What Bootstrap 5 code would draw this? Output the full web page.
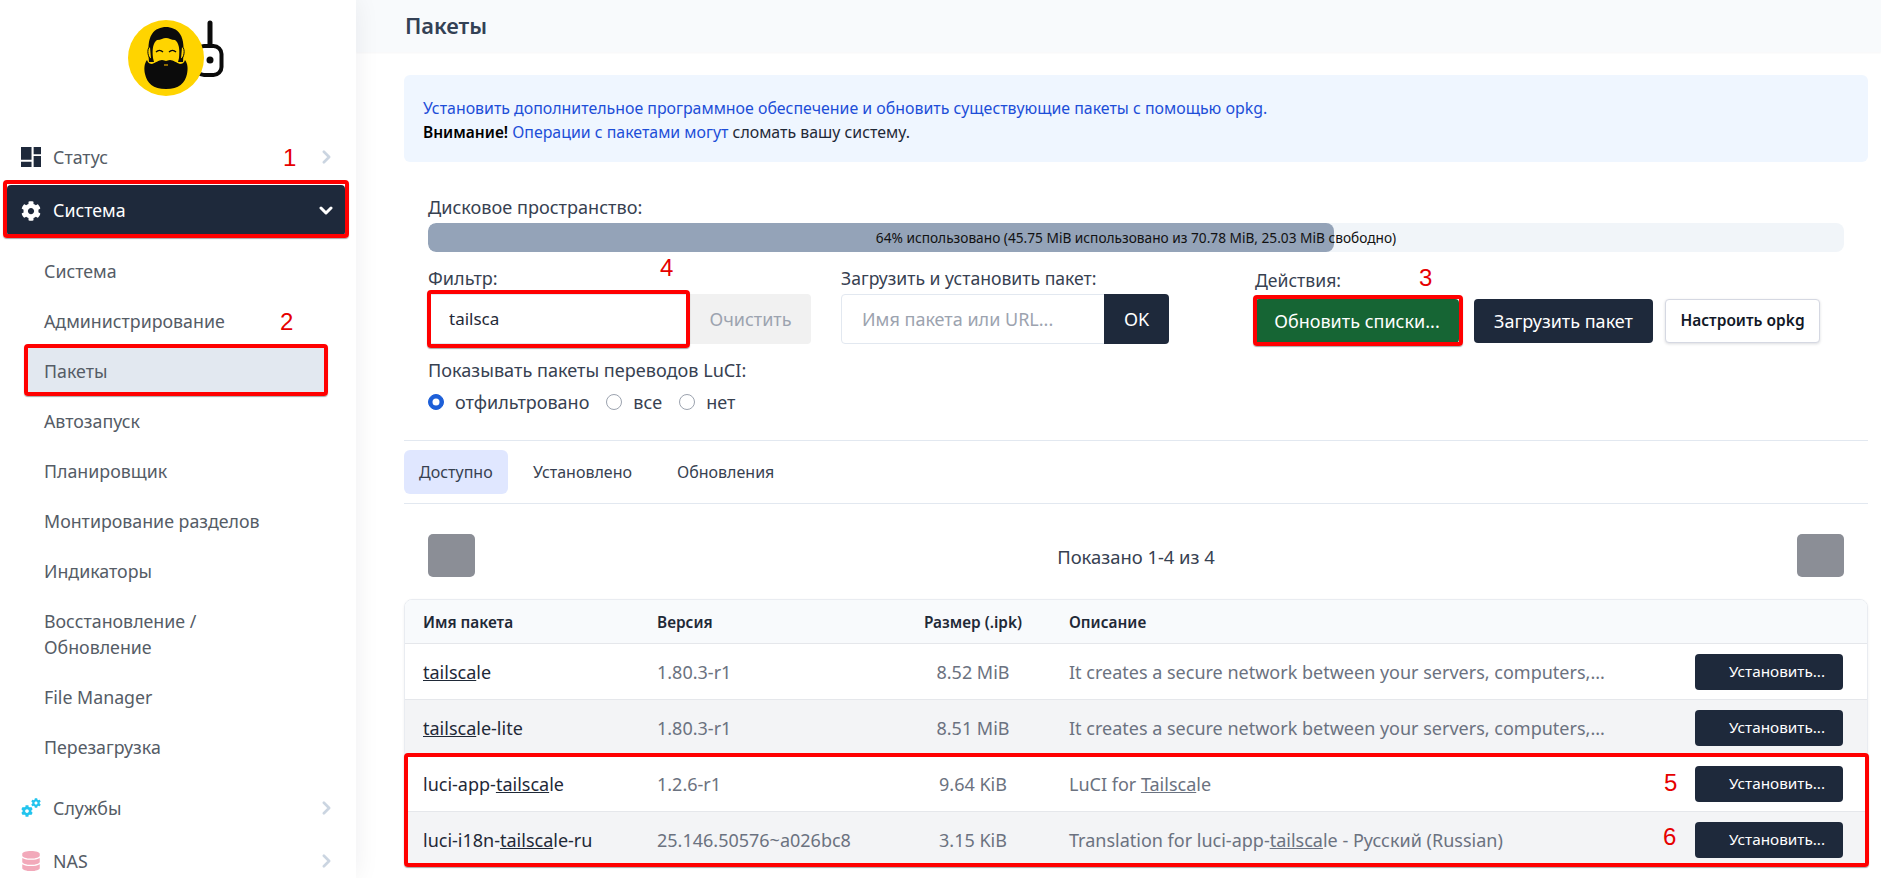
<!DOCTYPE html>
<html lang="ru">
<head>
<meta charset="utf-8">
<title>Пакеты</title>
<link href="https://cdn.jsdelivr.net/npm/bootstrap@5.3.0/dist/css/bootstrap.min.css" rel="stylesheet">
<style>
html,body{height:878px;overflow:hidden}
body{font-family:"Noto Sans","Open Sans",sans-serif;font-size:18px;color:#1f2937;background:#fff;position:relative}
.shell{height:878px}
.side{width:356px;flex:none;background:#fff;box-shadow:0 0 24px rgba(15,23,42,.07);position:relative;z-index:2;height:878px;overflow:hidden}
.logo-box{height:132px;padding:10px 0 0 120px}
.menu-top{display:flex;align-items:center;height:50px;margin:0 11px 3px 7px;padding:0 14px;color:#555c66;border-radius:4px;font-size:17.8px;text-decoration:none}
.menu-top svg.ico{width:20px;height:20px;margin-right:12px;flex:none}
.menu-top svg.chev{margin-left:auto;flex:none}
.menu-on{background:#1e293b;color:#fff;height:51px;margin-bottom:10px}
.menu-on svg.chev{margin-right:-2px}
.menu-sub{display:block;padding:12px 16px;margin:0 32px 0 28px;color:#555c66;line-height:26px;font-size:17.8px;text-decoration:none}
.menu-sub-on{background:#e2e8f0}
.sub-list{margin-bottom:11px}
.main-col{flex:1;min-width:0}
.top-head{height:52px;background:#f8fafc;padding:0 13px 0 49px;display:flex;align-items:center;font-size:21.800px;font-weight:600;color:#334155;box-shadow:0 1px 2px rgba(15,23,42,.04)}
.body-col{padding:23px 13px 0 48px}
.info-box{height:87px;background:#eff6ff;border:0;border-radius:6px;padding:21px 19px;margin:0;line-height:24px;color:#1d4ed8;font-size:15.900px}
.info-box b{color:#000;font-weight:600;font-size:15.500px}
.info-box .dark{color:#1f2937}
.disk-wrap{padding:33px 24px 0}
.fld-label{color:#374151;line-height:24px;font-size:18.100px;display:block;margin:0}
.disk-bar{height:29px;background:#f1f5f9;border-radius:8px;position:relative;margin-top:4px}
.disk-bar .progress-bar{background:#94a3b8;border-radius:8px}
.disk-text{position:absolute;left:0;right:0;top:0;line-height:30px;text-align:center;font-size:13.700px;color:#111}
.form-line{margin-top:14px}
.cell-a{width:383px;flex:none}
.cell-b{width:328px;flex:none;margin-left:30px}
.cell-b .fld-label{font-size:17.600px}
.cell-c{margin-left:86px;padding-top:2px}
.cell-c .fld-label{font-size:17.600px}
.cell-a .input-group,.cell-b .input-group{height:50px;margin-top:4px}
.fld-input{border-color:#e2e8f0;border-radius:4px;font-size:18px;padding:0 20px;color:#1f2937}
.cell-a .fld-input{font-size:17px}
.fld-input::placeholder{color:#9ca3af}
.btn-clear{width:121px;background:#f1f1f1;color:#9ca3af;font-size:18px;border:0;flex:none;border-radius:0 4px 4px 0}
.btn-ok{width:65px;background:#1e293b;color:#fff;font-size:18px;border:0;flex:none;border-radius:0 4px 4px 0}
.act-row{margin-top:7px}
.btn-act{height:44px;border-radius:4px;font-size:18px;padding:0;border:0;color:#fff;background:#1e293b}
.btn-act:hover{color:#fff;background:#1e293b}
.btn-upd{width:204px;background:#166534;margin-right:15px}
.btn-upd:hover{background:#166534}
.btn-load{width:179px;margin-right:12px}
.btn-cfg{width:155px;background:#fff;color:#111827;font-weight:600;font-size:15.500px;border:1px solid #d5d8e2;box-shadow:0 1px 3px rgba(15,23,42,.15)}
.radio-title{margin-top:14px}
.radio-row{margin-top:8px;line-height:24px;color:#374151}
.form-check-input{width:16px;height:16px;margin:0 11px 0 0;border-color:#9ca3af}
.form-check-input:checked{background-color:#1d5fd8;border-color:#1d5fd8}
.radio-item{display:flex;align-items:center;margin-right:17px}
.line-a{border:0;border-top:1px solid #e2e8f0;margin:0;opacity:1}
.rule-top{margin-top:26px}
.tabs-row{padding:9px 0 9px}
.tab-link{height:44px;display:flex;align-items:center;padding:0 15px;color:#374151;font-size:16px;border-radius:6px;margin-right:15px;text-decoration:none}
.tab-on{background:#e0e7ff;width:104px;margin-right:10px;color:#374151}
.pager{padding:30px 24px 0;height:95px;color:#374151}
.pager-sq{width:47px;height:43px;background:#8b8e96;border-radius:5px;border:0;padding:0}
.pager-txt{flex:1;text-align:center;padding-top:9px;font-size:18.400px;line-height:27px}
.pack-wrap{border:1px solid #e9ecf1;border-radius:8px;overflow:hidden;height:265px;box-shadow:0 1px 3px rgba(15,23,42,.06)}
.pack-table{table-layout:fixed;margin:0;font-size:18px}
.pack-table th{height:43px;background:#f8fafc;font-size:15.400px;font-weight:600;color:#1f2937;border-bottom:1px solid #e5e7eb;vertical-align:middle;padding:3px 18px 0}
.pack-table td{height:56px;vertical-align:middle;padding:2px 18px 0;border-bottom:1px solid #e5e7eb;color:#6b7280;background:#fff}
.pack-table tr.row-alt td{background:#f3f4f6}
.pack-table td.pname{color:#1f2937}
.pack-table th.c-size{text-align:center;padding:3px 0 0 47px}
.pack-table td.c-size{text-align:center;padding:2px 0 0 47px}
.pack-table td.c-btn{padding:1px 24px 0 0;text-align:right}
.btn-inst{width:148px;height:36px;border-radius:4px;background:#1e293b;color:#fff;font-size:15.300px;border:0;padding:0 10px 0 34px;text-align:left;white-space:nowrap}
.btn-inst:hover{background:#1e293b;color:#fff}
.mark-box{position:absolute;border:4px solid #f00;border-radius:4px;z-index:5;pointer-events:none;box-shadow:0 1px 1px rgba(0,0,0,.35)}
.mark-num{position:absolute;color:#e60000;font-family:"Liberation Sans",sans-serif;font-size:24px;line-height:24px;z-index:5}
.b1{left:3px;top:180px;width:346px;height:58px}
.b2{left:24px;top:344px;width:304px;height:52px}
.b3{left:427px;top:290px;width:263px;height:58px}
.b4{left:1253px;top:295px;width:210px;height:51px}
.b5{left:404px;top:753px;width:1465px;height:114px}
.n1{left:283px;top:146px}.n2{left:280px;top:310px}.n3{left:1419px;top:266px}.n4{left:660px;top:256px}.n5{left:1664px;top:771px}.n6{left:1663px;top:825px}
</style>
</head>
<body>
<svg width="0" height="0" class="position-absolute">
<symbol id="cog" viewBox="0 0 512 512"><path d="M487.4 315.7l-42.6-24.6c4.3-23.2 4.3-47 0-70.2l42.6-24.6c4.9-2.8 7.1-8.6 5.5-14-11.1-35.6-30-67.8-54.7-94.6-3.8-4.1-10-5.1-14.8-2.3L380.8 110c-17.9-15.4-38.5-27.3-60.8-35.1V25.8c0-5.6-3.9-10.5-9.4-11.7-36.7-8.2-74.3-7.8-109.2 0-5.5 1.2-9.4 6.1-9.4 11.7V75c-22.2 7.9-42.8 19.8-60.8 35.1L88.7 85.5c-4.9-2.8-11-1.9-14.8 2.3-24.7 26.7-43.6 58.9-54.7 94.6-1.7 5.4.6 11.2 5.5 14L67.3 221c-4.3 23.2-4.3 47 0 70.2l-42.6 24.6c-4.9 2.8-7.1 8.6-5.5 14 11.1 35.6 30 67.8 54.7 94.6 3.8 4.1 10 5.1 14.8 2.3l42.6-24.6c17.9 15.4 38.5 27.3 60.8 35.1v49.2c0 5.6 3.9 10.5 9.4 11.7 36.7 8.2 74.3 7.8 109.2 0 5.5-1.2 9.4-6.1 9.4-11.7v-49.2c22.2-7.9 42.8-19.8 60.8-35.1l42.6 24.6c4.9 2.8 11 1.9 14.8-2.3 24.7-26.7 43.6-58.9 54.7-94.6 1.5-5.5-.7-11.3-5.6-14.1zM256 336c-44.1 0-80-35.9-80-80s35.9-80 80-80 80 35.9 80 80-35.9 80-80 80z"/></symbol>
<symbol id="chev-r" viewBox="0 0 10 16"><path d="M2 2l6 6-6 6" fill="none" stroke="#cbd5e1" stroke-width="3" stroke-linecap="round" stroke-linejoin="round"/></symbol>
</svg>
<div class="shell d-flex">
  <aside class="side">
    <div class="logo-box">
      <svg width="110" height="90" viewBox="120 10 110 90" class="d-block">
        <path d="M210 23v24" stroke="#0b0b0b" stroke-width="5" stroke-linecap="round"/>
        <rect x="196" y="46" width="25.500" height="29" rx="8" fill="#fff" stroke="#0b0b0b" stroke-width="4"/>
        <circle cx="210" cy="60" r="3.500" fill="#0b0b0b"/>
        <circle cx="166" cy="58" r="38" fill="#ffd400"/>
        <path d="M149 62c-1-14-1-22 3-28 3-5 9-7 14-7s11 2 14 7c4 6 4 14 3 28z" fill="#0b0b0b"/>
        <path d="M150 47c-3 0-3 10 1 12M182 47c3 0 3 10-1 12" fill="#ffd400" stroke="#0b0b0b" stroke-width="1"/>
        <path d="M153 58c-1-9 0-15 4-18 4 0 6-2 9-2s5 2 9 2c4 3 5 9 4 18l-2 8h-22z" fill="#ffd400"/>
        <path d="M147 60c1 3 3 4 5 4 3-1 7-4 10-4 2 0 3 1 4 1s2-1 4-1c3 0 7 3 10 4 2 0 4-1 5-4 3 4 3 9 2 14-2 9-8 15-21 15s-19-6-21-15c-1-5-1-10 2-14z" fill="#0b0b0b"/>
        <path d="M156 52c2-2 5-2 7 0M169 52c2-2 5-2 7 0" fill="none" stroke="#0b0b0b" stroke-width="1.300"/>
        <path d="M164 65h4" stroke="#b98a00" stroke-width="1.500"/>
      </svg>
    </div>
    <nav>
      <a class="menu-top" href="#">
        <svg class="ico" viewBox="0 0 19 19" fill="#1e293b"><path d="M0 0h10v12H0zM12 0h7v7h-7zM0 14h10v5H0zM12 8.500h7V19h-7z"/></svg>
        Статус
        <svg class="chev" width="9" height="14"><use href="#chev-r"/></svg>
      </a>
      <a class="menu-top menu-on" href="#">
        <svg class="ico" fill="#fff"><use href="#cog"/></svg>
        Система
        <svg class="chev" width="14" height="10" viewBox="0 0 14 10"><path d="M2 2l5 5 5-5" fill="none" stroke="#fff" stroke-width="3" stroke-linecap="round" stroke-linejoin="round"/></svg>
      </a>
      <div class="sub-list">
        <a class="menu-sub" href="#">Система</a>
        <a class="menu-sub" href="#">Администрирование</a>
        <a class="menu-sub menu-sub-on" href="#">Пакеты</a>
        <a class="menu-sub" href="#">Автозапуск</a>
        <a class="menu-sub" href="#">Планировщик</a>
        <a class="menu-sub" href="#">Монтирование разделов</a>
        <a class="menu-sub" href="#">Индикаторы</a>
        <a class="menu-sub" href="#">Восстановление /<br>Обновление</a>
        <a class="menu-sub" href="#">File Manager</a>
        <a class="menu-sub" href="#">Перезагрузка</a>
      </div>
      <a class="menu-top" href="#">
        <svg class="ico" viewBox="0 0 20 20" fill="#22c4ee"><use href="#cog" x="0" y="7" width="12" height="12"/><use href="#cog" x="10" y="0" width="10" height="10"/></svg>
        Службы
        <svg class="chev" width="9" height="14"><use href="#chev-r"/></svg>
      </a>
      <a class="menu-top" href="#">
        <svg class="ico" viewBox="0 0 448 512" fill="#f2a9ba"><path d="M448 73.143v45.714C448 159.143 347.667 192 224 192S0 159.143 0 118.857V73.143C0 32.857 100.333 0 224 0s224 32.857 224 73.143zM448 176v102.857C448 319.143 347.667 352 224 352S0 319.143 0 278.857V176c48.125 33.143 136.208 48.572 224 48.572S399.874 209.143 448 176zm0 160v102.857C448 479.143 347.667 512 224 512S0 479.143 0 438.857V336c48.125 33.143 136.208 48.572 224 48.572S399.874 369.143 448 336z"/></svg>
        NAS
        <svg class="chev" width="9" height="14"><use href="#chev-r"/></svg>
      </a>
    </nav>
  </aside>
  <main class="main-col">
    <div class="top-head">Пакеты</div>
    <div class="body-col">
      <div class="alert info-box" role="alert">
        Установить дополнительное программное обеспечение и обновить существующие пакеты с помощью opkg.<br>
        <b>Внимание!</b> Операции с пакетами могут <span class="dark">сломать вашу систему.</span>
      </div>
      <div class="disk-wrap">
        <span class="fld-label">Дисковое пространство:</span>
        <div class="progress disk-bar">
          <div class="progress-bar" style="width:64%"></div>
          <div class="disk-text">64% использовано (45.75 MiB использовано из 70.78 MiB, 25.03 MiB свободно)</div>
        </div>
        <div class="d-flex form-line">
          <div class="cell-a">
            <label class="fld-label">Фильтр:</label>
            <div class="input-group">
              <input class="form-control fld-input" value="tailsca">
              <button class="btn btn-clear" type="button">Очистить</button>
            </div>
          </div>
          <div class="cell-b">
            <label class="fld-label">Загрузить и установить пакет:</label>
            <div class="input-group">
              <input class="form-control fld-input" placeholder="Имя пакета или URL...">
              <button class="btn btn-ok" type="button">OK</button>
            </div>
          </div>
          <div class="cell-c">
            <span class="fld-label">Действия:</span>
            <div class="d-flex act-row">
              <button class="btn btn-act btn-upd" type="button">Обновить списки...</button>
              <button class="btn btn-act btn-load" type="button">Загрузить пакет</button>
              <button class="btn btn-act btn-cfg" type="button">Настроить opkg</button>
            </div>
          </div>
        </div>
        <span class="fld-label radio-title">Показывать пакеты переводов LuCI:</span>
        <div class="d-flex radio-row">
          <label class="radio-item"><input class="form-check-input" type="radio" name="tr" checked>отфильтровано</label>
          <label class="radio-item"><input class="form-check-input" type="radio" name="tr">все</label>
          <label class="radio-item"><input class="form-check-input" type="radio" name="tr">нет</label>
        </div>
      </div>
      <hr class="line-a rule-top">
      <div class="nav tabs-row">
        <a class="tab-link tab-on" href="#">Доступно</a>
        <a class="tab-link" href="#">Установлено</a>
        <a class="tab-link" href="#">Обновления</a>
      </div>
      <hr class="line-a">
      <div class="d-flex pager">
        <button class="pager-sq" type="button" aria-label="Назад"></button>
        <div class="pager-txt">Показано 1-4 из 4</div>
        <button class="pager-sq" type="button" aria-label="Вперёд"></button>
      </div>
      <div class="pack-wrap">
        <table class="table pack-table">
          <colgroup><col style="width:234px"><col style="width:209px"><col style="width:203px"><col><col style="width:180px"></colgroup>
          <thead><tr><th>Имя пакета</th><th>Версия</th><th class="c-size">Размер (.ipk)</th><th>Описание</th><th></th></tr></thead>
          <tbody>
            <tr><td class="pname"><u>tailsca</u>le</td><td>1.80.3-r1</td><td class="c-size">8.52 MiB</td><td>It creates a secure network between your servers, computers,...</td><td class="c-btn"><button class="btn btn-inst" type="button">Установить...</button></td></tr>
            <tr class="row-alt"><td class="pname"><u>tailsca</u>le-lite</td><td>1.80.3-r1</td><td class="c-size">8.51 MiB</td><td>It creates a secure network between your servers, computers,...</td><td class="c-btn"><button class="btn btn-inst" type="button">Установить...</button></td></tr>
            <tr><td class="pname">luci-app-<u>tailsca</u>le</td><td>1.2.6-r1</td><td class="c-size">9.64 KiB</td><td>LuCI for <u>Tailsca</u>le</td><td class="c-btn"><button class="btn btn-inst" type="button">Установить...</button></td></tr>
            <tr class="row-alt"><td class="pname">luci-i18n-<u>tailsca</u>le-ru</td><td>25.146.50576~a026bc8</td><td class="c-size">3.15 KiB</td><td>Translation for luci-app-<u>tailsca</u>le - Русский (Russian)</td><td class="c-btn"><button class="btn btn-inst" type="button">Установить...</button></td></tr>
          </tbody>
        </table>
      </div>
    </div>
  </main>
</div>
<div class="mark-box b1"></div><div class="mark-box b2"></div><div class="mark-box b3"></div><div class="mark-box b4"></div><div class="mark-box b5"></div>
<div class="mark-num n1">1</div><div class="mark-num n2">2</div><div class="mark-num n3">3</div><div class="mark-num n4">4</div><div class="mark-num n5">5</div><div class="mark-num n6">6</div>
</body>
</html>
